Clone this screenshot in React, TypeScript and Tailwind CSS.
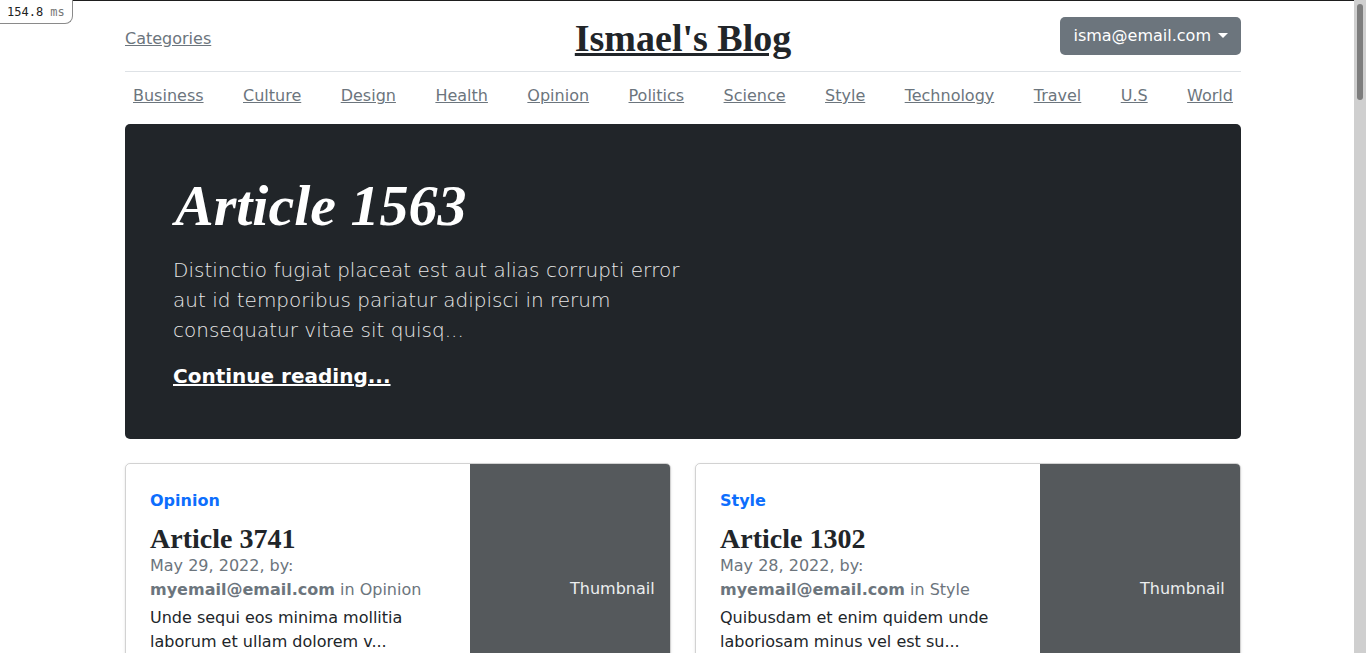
import React from "react";

const cats = ["Business","Culture","Design","Health","Opinion","Politics","Science","Style","Technology","Travel","U.S","World"];

const posts = [
  { cat: "Opinion", title: "Article 3741", date: "May 29, 2022", text: "Unde sequi eos minima mollitia laborum et ullam dolorem v..." },
  { cat: "Style", title: "Article 1302", date: "May 28, 2022", text: "Quibusdam et enim quidem unde laboriosam minus vel est su..." },
];

export default function App() {
  return (
    <div className="relative w-full h-[653px] overflow-hidden bg-white text-[#212529] font-['DejaVu_Sans',sans-serif] text-[16px] leading-6">
      <div className="mx-auto w-[1116px]">
        <header className="flex items-center justify-between h-[72px] border-b border-[#dee2e6] leading-none">
          <div className="w-1/3 pt-[7px]">
            <a href="#" className="text-[#6c757d] underline">Categories</a>
          </div>
          <div className="w-1/3 text-center pt-[4px]">
            <a href="#" className="font-['Liberation_Serif',serif] font-bold text-[38px] text-[#212529] underline">Ismael's Blog</a>
          </div>
          <div className="w-1/3 flex justify-end">
            <button className="h-[38px] mt-[1px] px-[13px] flex items-center gap-[7px] bg-[#6c757d] text-white rounded-[5px] leading-6">
              <span>isma@email.com</span>
              <span className="inline-block w-0 h-0 border-t-[5px] border-t-white border-x-[5px] border-x-transparent mt-[-2px]"></span>
            </button>
          </div>
        </header>

        <nav className="h-[44px] flex items-center justify-between pt-[4px] mb-2">
          {cats.map((c) => (
            <a key={c} href="#" className="px-2 py-1 text-[#6c757d] underline">{c}</a>
          ))}
        </nav>

        <div className="rounded-[5px] bg-[#212529] text-white p-12 mb-6">
          <div className="w-[510px]">
            <h1 className="font-['Liberation_Serif',serif] italic font-bold text-[58px] leading-[67px] mb-4 pl-[2px] h-[67px]">Article 1563</h1>
            <p className="text-[20px] font-light leading-[30px] mb-4 text-[#e8e8e8]">
              Distinctio fugiat placeat est aut alias corrupti error aut id temporibus pariatur adipisci in rerum consequatur vitae sit quisq...
            </p>
            <p className="text-[20px] leading-[30px]">
              <a href="#" className="font-bold underline text-white">Continue reading...</a>
            </p>
          </div>
        </div>

        <div className="grid grid-cols-2 gap-6">
          {posts.map((p) => (
            <div key={p.title} className="flex h-[250px] border border-black/[.175] rounded-[5px] overflow-hidden shadow-sm">
              <div className="flex-1 p-6 flex flex-col">
                <strong className="text-[#0d6efd] mb-2 pt-[1px]">{p.cat}</strong>
                <h3 className="font-['Liberation_Serif',serif] font-bold text-[28px] leading-[34px] pt-[1px] h-[33px] text-[#212529]">{p.title}</h3>
                <div className="text-[#6c757d] mb-1">
                  {p.date}, by: <strong>myemail@email.com</strong> in {p.cat}
                </div>
                <p className="text-[#212529]">{p.text}</p>
              </div>
              <div className="w-[200px] h-[250px] bg-[#55595c] flex items-center pl-[100px] text-[#eceeef]">
                Thumbnail
              </div>
            </div>
          ))}
        </div>
      </div>

      <div className="absolute top-0 left-0 right-[12px] h-px bg-[#1e1e1e]"></div>
      <div className="absolute top-0 left-0 w-[73px] h-[24px] bg-white border-r border-b border-[#8a8a8a] rounded-br-[8px] flex items-center pl-[7px] font-['DejaVu_Sans_Mono',monospace] text-[12px] leading-none text-[#222]">
        154.8&nbsp;<span className="text-[#777]">ms</span>
      </div>
      <div className="absolute top-0 right-0 w-[12px] h-full bg-[#cfcfcf]">
        <div className="absolute left-[3px] top-[4px] w-[6px] h-[96px] rounded-full bg-[#7d7d7d]"></div>
      </div>
    </div>
  );
}
